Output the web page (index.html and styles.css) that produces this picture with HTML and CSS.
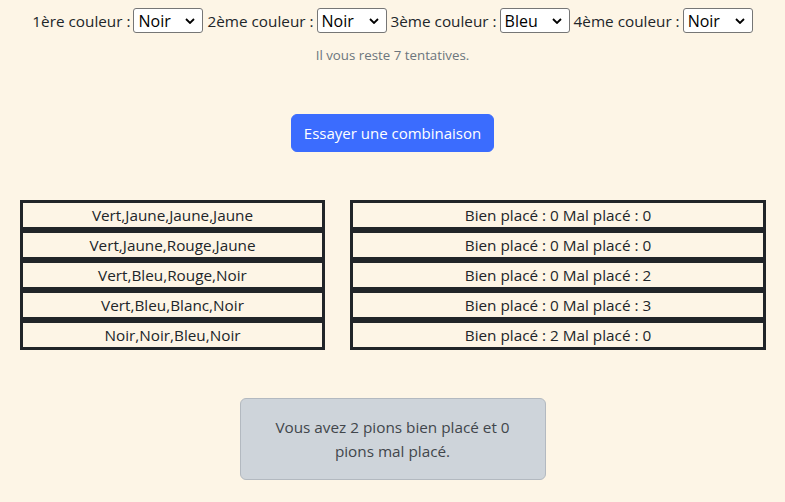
FILE: index.html
```html
<!DOCTYPE html>
<html lang="fr">
<head>
<meta charset="utf-8">
<title>Mastermind</title>
<link rel="stylesheet" href="styles.css">
</head>
<body>
<div class="picker">
  <span class="lbl">1ère couleur :</span>
  <span class="sel"><select><option>Noir</option></select><svg class="chev" viewBox="0 0 10 6" width="10" height="6"><path d="M1 1 L5 5 L9 1" fill="none" stroke="#000" stroke-width="1.8"/></svg></span>
  <span class="lbl">2ème couleur :</span>
  <span class="sel"><select><option>Noir</option></select><svg class="chev" viewBox="0 0 10 6" width="10" height="6"><path d="M1 1 L5 5 L9 1" fill="none" stroke="#000" stroke-width="1.8"/></svg></span>
  <span class="lbl">3ème couleur :</span>
  <span class="sel"><select><option>Bleu</option></select><svg class="chev" viewBox="0 0 10 6" width="10" height="6"><path d="M1 1 L5 5 L9 1" fill="none" stroke="#000" stroke-width="1.8"/></svg></span>
  <span class="lbl">4ème couleur :</span>
  <span class="sel"><select><option>Noir</option></select><svg class="chev" viewBox="0 0 10 6" width="10" height="6"><path d="M1 1 L5 5 L9 1" fill="none" stroke="#000" stroke-width="1.8"/></svg></span>
</div>
<p class="remain">Il vous reste 7 tentatives.</p>
<div class="actions"><button class="btn">Essayer une combinaison</button></div>
<div class="tables">
  <div class="col left">
    <div class="cell">Vert,Jaune,Jaune,Jaune</div>
    <div class="cell">Vert,Jaune,Rouge,Jaune</div>
    <div class="cell">Vert,Bleu,Rouge,Noir</div>
    <div class="cell">Vert,Bleu,Blanc,Noir</div>
    <div class="cell">Noir,Noir,Bleu,Noir</div>
  </div>
  <div class="col right">
    <div class="cell">Bien placé : 0 Mal placé : 0</div>
    <div class="cell">Bien placé : 0 Mal placé : 0</div>
    <div class="cell">Bien placé : 0 Mal placé : 2</div>
    <div class="cell">Bien placé : 0 Mal placé : 3</div>
    <div class="cell">Bien placé : 2 Mal placé : 0</div>
  </div>
</div>
<div class="alert">Vous avez 2 pions bien placé et 0 pions mal placé.</div>
</body>
</html>
```
FILE: styles.css
```css
* { box-sizing: border-box; }
body {
  margin: 0;
  background: #fdf5e6;
  color: #212529;
  font-family: "Open Sans", "Noto Sans", sans-serif;
  font-size: 15.3px;
  line-height: 24px;
}
.picker {
  display: flex;
  justify-content: center;
  align-items: center;
  padding-top: 8px;
  height: 33px;
}
.lbl { margin-right: 3px; white-space: nowrap; }
.sel { position: relative; display: inline-block; margin-right: 4px; height: 25px; }
.sel:last-child { margin-right: 0; }
.sel select {
  appearance: none;
  -webkit-appearance: none;
  width: 70px;
  height: 25px;
  border: 1px solid #767676;
  border-radius: 3px;
  background: #fff;
  color: #000;
  font-family: inherit;
  font-size: 16px;
  padding: 0 0 0 4px;
  margin: 0;
  display: block;
}
.chev { position: absolute; right: 8px; top: 10px; pointer-events: none; }
.remain {
  margin: 12px 0 0;
  text-align: center;
  font-size: 13.3px;
  line-height: 21px;
  color: #6c757d;
}
.actions { display: flex; justify-content: center; margin-top: 48px; }
.btn {
  font-family: inherit;
  font-size: 15px;
  line-height: 24px;
  padding: 6px 12px;
  border: 1px solid #3b6cfe;
  background: #3b6cfe;
  color: #fff;
  border-radius: 6px;
}
.tables {
  display: flex;
  gap: 25px;
  padding-left: 20px;
  margin-top: 48px;
}
.col { display: flex; flex-direction: column; }
.left { width: 305px; }
.right { width: 416px; }
.cell {
  border: 3px solid #212529;
  height: 30px;
  text-align: center;
  line-height: 24px;
}
.alert {
  width: 306px;
  margin: 48px auto 0;
  padding: 16px;
  background: #ced4da;
  border: 1px solid #b3b9c0;
  border-radius: 6px;
  color: #41464b;
  text-align: center;
}
```
